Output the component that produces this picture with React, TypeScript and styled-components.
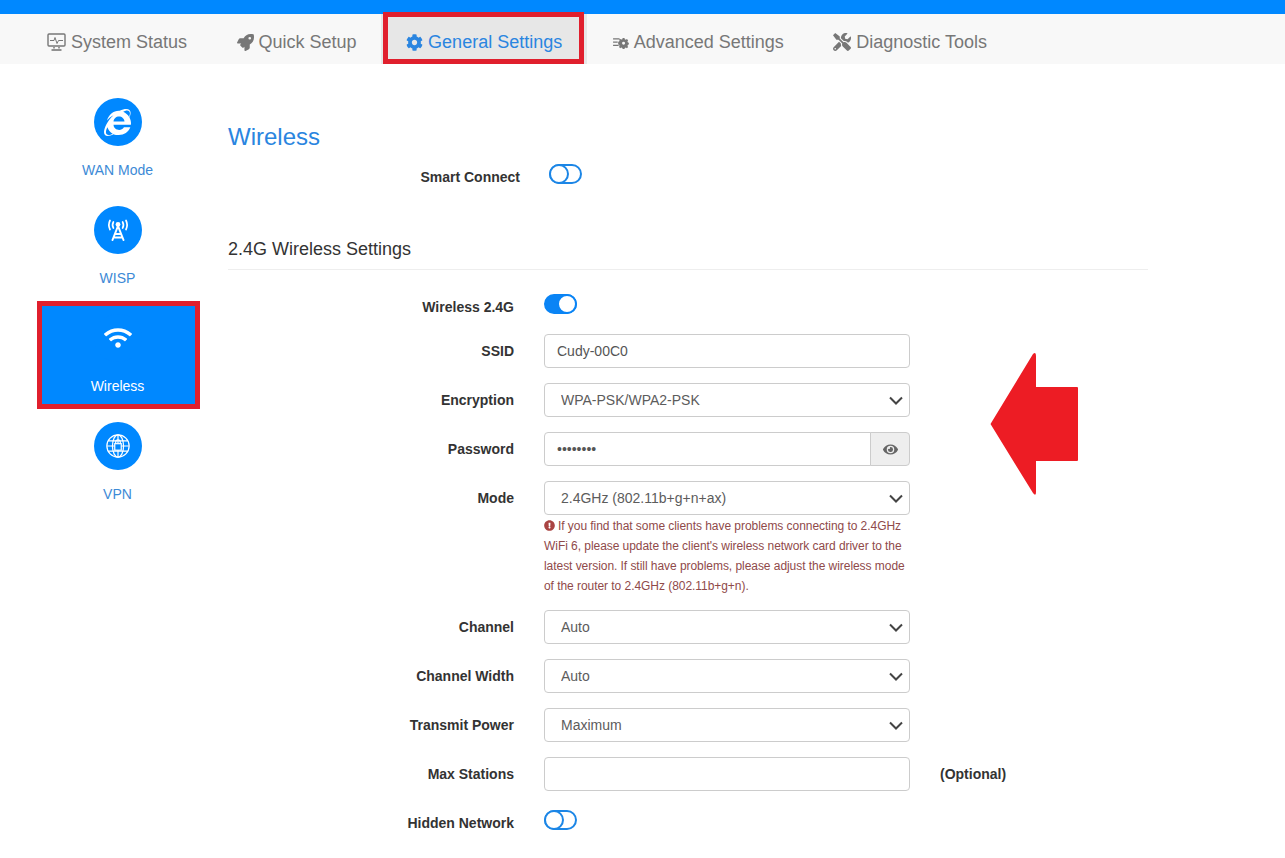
import { ReactNode } from 'react'
import styled, { createGlobalStyle } from 'styled-components'
import {
  FaCog,
  FaExclamationCircle,
  FaEye,
  FaInternetExplorer,
  FaRocket,
  FaTools,
  FaWifi,
} from 'react-icons/fa'

const GlobalStyle = createGlobalStyle`
  html, body {
    margin: 0;
    padding: 0;
    background: #fff;
    font-family: "Liberation Sans", Arial, sans-serif;
    color: #333;
    overflow: hidden;
  }
  * { box-sizing: border-box; }
`

const TopBar = styled.div`
  height: 14px;
  background: #0088ff;
`

const Nav = styled.nav`
  display: flex;
  height: 50px;
  padding-left: 22px;
  background: #f8f8f8;
`

const Tab = styled.a<{ $active?: boolean }>`
  position: relative;
  display: flex;
  align-items: center;
  gap: 5px;
  padding: 6px 24.5px 0 25px;
  font-size: 18px;
  color: ${({ $active }) => ($active ? '#2a85e0' : '#777')};
  background: ${({ $active }) => ($active ? '#e7e7e7' : 'transparent')};
  svg { flex: none; }
  ${({ $active }) =>
    $active &&
    `
    &::after {
      content: '';
      position: absolute;
      top: -2px;
      bottom: 0;
      left: 2px;
      right: 3px;
      border: 5px solid #e01f2d;
    }
  `}
`

const Page = styled.div`
  display: flex;
  align-items: flex-start;
  padding: 21px 0 0 37px;
`

const Sidebar = styled.aside`
  flex: none;
  width: 163px;
  margin-right: 28px;
`

const SideItem = styled.a<{ $active?: boolean }>`
  display: flex;
  flex-direction: column;
  align-items: center;
  height: 108px;
  padding-top: ${({ $active }) => ($active ? '8px' : '13px')};
  padding-right: 2px;
  font-size: 14px;
  line-height: 20px;
  color: ${({ $active }) => ($active ? '#fff' : '#3d8ad6')};
  background: ${({ $active }) => ($active ? '#0088ff' : 'transparent')};
  border: ${({ $active }) => ($active ? '5px solid #e01f2d' : '0')};
`

const SideIcon = styled.span`
  display: flex;
  align-items: center;
  justify-content: center;
  width: 48px;
  height: 48px;
  margin-bottom: 14px;
  border-radius: 50%;
  color: #fff;
  background: #0088ff;
`

const Main = styled.main`
  display: flex;
  flex-direction: column;
  width: 920px;
`

const Title = styled.h1`
  margin: 0;
  padding-top: 37px;
  font-size: 24px;
  line-height: 30px;
  font-weight: 400;
  color: #2a85e0;
`

const SmartRow = styled.div`
  display: flex;
  gap: 29px;
  padding: 12px 0 0 6px;
  margin-bottom: 52px;
`

const SectionTitle = styled.h2`
  margin: 0 0 20px;
  padding-bottom: 10px;
  font-size: 18px;
  line-height: 20px;
  font-weight: 400;
  color: #333;
  border-bottom: 1px solid #eee;
`

const Row = styled.div`
  display: flex;
  align-items: center;
  gap: 30px;
  height: 34px;
  margin-bottom: 15px;
`

const ToggleRow = styled(Row)`
  align-items: flex-start;
  height: 20px;
  margin-top: 4px;
  margin-bottom: 20px;
`

const Label = styled.label<{ $switch?: boolean }>`
  flex: none;
  width: 286px;
  padding-top: ${({ $switch }) => ($switch ? '3px' : '0')};
  text-align: right;
  font-size: 14px;
  line-height: 20px;
  font-weight: 700;
  color: #333;
`

const Switch = styled.span<{ $on?: boolean }>`
  display: flex;
  justify-content: ${({ $on }) => ($on ? 'flex-end' : 'flex-start')};
  flex: none;
  width: 33px;
  height: 20px;
  border: 2px solid ${({ $on }) => ($on ? '#0a84f5' : '#1c86e6')};
  border-radius: 10px;
  background: ${({ $on }) => ($on ? '#0a84f5' : '#fff')};
  &::before {
    content: '';
    flex: none;
    box-sizing: border-box;
    width: 20px;
    height: 20px;
    margin: -2px;
    border: 2px solid ${({ $on }) => ($on ? '#0a84f5' : '#1c86e6')};
    border-radius: 50%;
    background: #fff;
  }
`

const Control = styled.div`
  position: relative;
  display: flex;
  flex: none;
  width: 366px;
`

const Field = styled.input`
  flex: 1;
  min-width: 0;
  height: 34px;
  padding: 0 12px;
  font: 14px "Liberation Sans", Arial, sans-serif;
  color: #555;
  background: #fff;
  border: 1px solid #ccc;
  border-radius: 4px;
  outline: 0;
`

const PasswordField = styled(Field)`
  border-radius: 4px 0 0 4px;
`

const Addon = styled.span`
  display: flex;
  align-items: center;
  justify-content: center;
  flex: none;
  width: 40px;
  height: 34px;
  margin-left: -1px;
  color: #666;
  background: #eee;
  border: 1px solid #ccc;
  border-radius: 0 4px 4px 0;
`

const Select = styled.select`
  width: 100%;
  height: 34px;
  padding: 0 16px;
  appearance: none;
  font: 14px "Liberation Sans", Arial, sans-serif;
  color: #5c5c5c;
  background: #fff;
  border: 1px solid #ccc;
  border-radius: 4px;
  outline: 0;
`

const Chevron = styled.svg`
  position: absolute;
  top: 13px;
  right: 7px;
  pointer-events: none;
`

const Warning = styled.p`
  width: 366px;
  margin: -14px 0 14px 316px;
  font-size: 12px;
  line-height: 20px;
  letter-spacing: -0.05px;
  color: #8f4a4a;
  svg {
    width: 11px;
    height: 11px;
    margin-right: 3px;
    vertical-align: -1px;
    color: #a94442;
  }
`

const Optional = styled.span`
  font-size: 14px;
  font-weight: 700;
  color: #333;
`

const Arrow = styled.svg`
  position: absolute;
  top: 350px;
  left: 988px;
`

function MonitorIcon() {
  return (
    <svg width="19" height="18" viewBox="0 0 19 18" fill="none" stroke="currentColor">
      <rect x="1" y="1" width="17" height="12" rx="1" strokeWidth="1.4" />
      <path d="M3 7.5h4l1-3 2 6 1.5-3H16" strokeWidth="1" />
      <path d="M7 14v1.6M12 14v1.6" strokeWidth="1.5" />
      <path d="M4.5 17h10" strokeWidth="1.6" />
    </svg>
  )
}

function ListCogIcon() {
  return (
    <svg width="17" height="13" viewBox="0 0 18 14" fill="currentColor">
      <path d="M1 2.5h7v1.4H1zM1 6h5v1.4H1zM1 9.5h6v1.4H1z" />
      <path
        fillRule="evenodd"
        d="M11.3 2.2h2l.3 1.3 1.2.5 1.1-.7 1.3 1.4-.7 1.1.5 1.2 1 .3v1.9l-1 .3-.5 1.2.7 1.1-1.3 1.3-1.1-.6-1.2.5-.3 1.1h-2l-.3-1.1-1.2-.5-1.1.6-1.3-1.3.6-1.1-.5-1.2-1-.3V6.1l1-.3.5-1.2-.6-1.1L8.7 3.1l1.1.7L11 3.5zM12.3 6.2a1.6 1.6 0 1 0 0 3.2 1.6 1.6 0 0 0 0-3.2z"
      />
    </svg>
  )
}

function TowerIcon() {
  return (
    <svg width="26" height="22" viewBox="0 0 26 22" fill="none" stroke="#fff" strokeLinecap="round">
      <circle cx="13" cy="5.5" r="2.4" fill="#fff" stroke="none" />
      <path d="M5 1.5a10 10 0 0 0 0 9M21 1.5a10 10 0 0 1 0 9" strokeWidth="1.7" />
      <path d="M8.4 3a6 6 0 0 0 0 6M17.6 3a6 6 0 0 1 0 6" strokeWidth="1.7" />
      <path d="M13 7 7.5 21M13 7l5.5 14M10 15h6M9 18.5h8" strokeWidth="2" />
    </svg>
  )
}

function GlobeLockIcon() {
  return (
    <svg width="26" height="26" viewBox="0 0 28 28" fill="none" stroke="#fff" strokeWidth="1.3">
      <circle cx="14" cy="14" r="12" />
      <ellipse cx="14" cy="14" rx="6" ry="12" />
      <path d="M3.5 8.5h21M2 14h24M3.5 19.5h21M14 2v24" />
      <rect x="10.5" y="11.5" width="7" height="7" fill="#0088ff" />
      <path d="M11.5 11.5V10a2.5 2.5 0 0 1 5 0v1.5" />
    </svg>
  )
}

const navTabs: { label: string; icon: ReactNode; active?: boolean }[] = [
  { label: 'System Status', icon: <MonitorIcon /> },
  { label: 'Quick Setup', icon: <FaRocket size={17} /> },
  { label: 'General Settings', icon: <FaCog size={17} />, active: true },
  { label: 'Advanced Settings', icon: <ListCogIcon /> },
  { label: 'Diagnostic Tools', icon: <FaTools size={18} /> },
]

const SelectField = ({ value }: { value: string }) => (
  <Control>
    <Select defaultValue={value}>
      <option>{value}</option>
    </Select>
    <Chevron width="14" height="9" viewBox="0 0 14 9" fill="none" stroke="#444" strokeWidth="2">
      <path d="M1 1.5l6 6 6-6" />
    </Chevron>
  </Control>
)

export default function App() {
  return (
    <>
      <GlobalStyle />
      <TopBar />
      <Nav>
        {navTabs.map((tab) => (
          <Tab key={tab.label} $active={tab.active}>
            {tab.icon}
            {tab.label}
          </Tab>
        ))}
      </Nav>
      <Page>
        <Sidebar>
          <SideItem>
            <SideIcon>
              <FaInternetExplorer size={27} />
            </SideIcon>
            WAN Mode
          </SideItem>
          <SideItem>
            <SideIcon>
              <TowerIcon />
            </SideIcon>
            WISP
          </SideItem>
          <SideItem $active>
            <SideIcon>
              <FaWifi size={28} />
            </SideIcon>
            Wireless
          </SideItem>
          <SideItem>
            <SideIcon>
              <GlobeLockIcon />
            </SideIcon>
            VPN
          </SideItem>
        </Sidebar>
        <Main>
          <Title>Wireless</Title>
          <SmartRow>
            <Label $switch>Smart Connect</Label>
            <Switch />
          </SmartRow>
          <SectionTitle>2.4G Wireless Settings</SectionTitle>
          <ToggleRow>
            <Label $switch>Wireless 2.4G</Label>
            <Switch $on />
          </ToggleRow>
          <Row>
            <Label>SSID</Label>
            <Control>
              <Field readOnly defaultValue="Cudy-00C0" />
            </Control>
          </Row>
          <Row>
            <Label>Encryption</Label>
            <SelectField value="WPA-PSK/WPA2-PSK" />
          </Row>
          <Row>
            <Label>Password</Label>
            <Control>
              <PasswordField readOnly type="password" defaultValue="12345678" />
              <Addon>
                <FaEye size={15} />
              </Addon>
            </Control>
          </Row>
          <Row>
            <Label>Mode</Label>
            <SelectField value="2.4GHz (802.11b+g+n+ax)" />
          </Row>
          <Warning>
            <FaExclamationCircle />
            If you find that some clients have problems connecting to 2.4GHz WiFi 6, please update the
            client's wireless network card driver to the latest version. If still have problems, please
            adjust the wireless mode of the router to 2.4GHz (802.11b+g+n).
          </Warning>
          <Row>
            <Label>Channel</Label>
            <SelectField value="Auto" />
          </Row>
          <Row>
            <Label>Channel Width</Label>
            <SelectField value="Auto" />
          </Row>
          <Row>
            <Label>Transmit Power</Label>
            <SelectField value="Maximum" />
          </Row>
          <Row>
            <Label>Max Stations</Label>
            <Control>
              <Field readOnly />
            </Control>
            <Optional>(Optional)</Optional>
          </Row>
          <ToggleRow>
            <Label $switch>Hidden Network</Label>
            <Switch />
          </ToggleRow>
        </Main>
      </Page>
      <Arrow width="92" height="147" viewBox="988 350 92 147">
        <path
          d="M990.5 424 L1033 354 Q1036 351 1036 356 L1036 387 L1077 387 Q1078 387 1078 388 L1078 460 Q1078 461 1077 461 L1036 461 L1036 492 Q1036 497 1033 493 Z"
          fill="#ed1c24"
        />
      </Arrow>
    </>
  )
}
